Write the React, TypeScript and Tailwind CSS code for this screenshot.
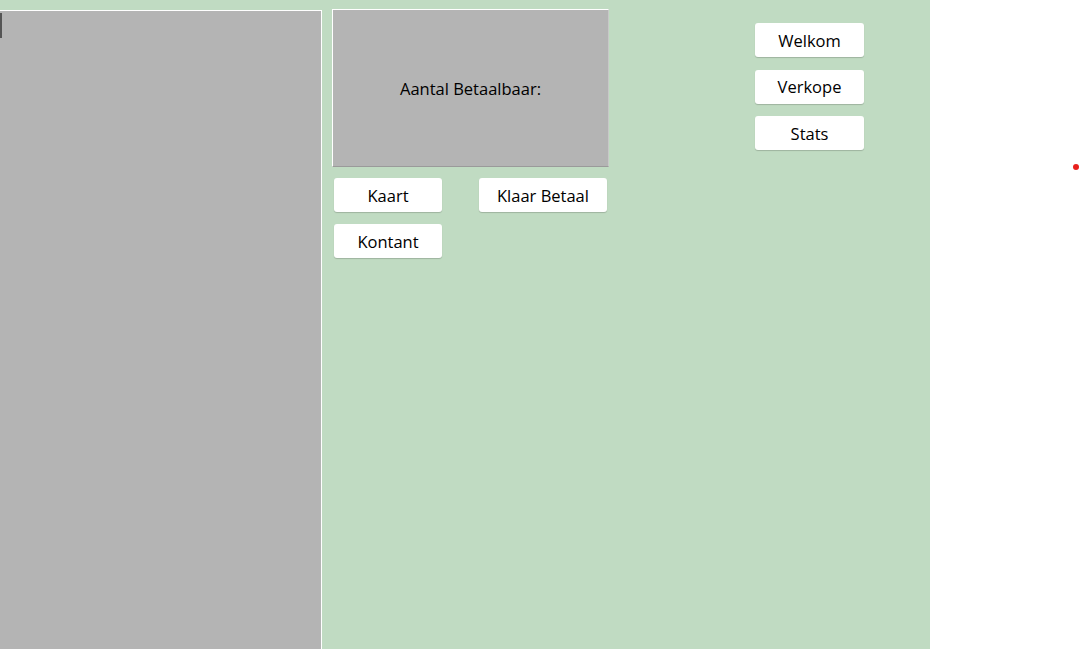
import type { ReactNode } from "react";

function Btn({ children, className = "" }: { children: ReactNode; className?: string }) {
  return (
    <button
      className={`h-[34px] rounded-[3px] bg-white pt-[2px] text-[16.5px] text-black shadow-[0_1px_1px_rgba(0,0,0,0.18)] ${className}`}
    >
      {children}
    </button>
  );
}

export default function App() {
  return (
    <div className="flex h-[649px] w-[1080px] bg-white font-['Open_Sans','Noto_Sans',sans-serif]">
      <div className="flex h-full w-[930px] bg-[#c0dbc2]">
        <div className="relative mt-[10px] h-[639px] w-[322px] border-t border-r border-white bg-[#b4b4b4]">
          <div className="absolute left-0 top-[2px] h-[25px] w-[2px] bg-[#555]" />
        </div>

        <div className="ml-[10px] mt-[9px] flex w-[277px] flex-col">
          <div className="flex h-[158px] items-center justify-center border-t border-l border-white border-b border-b-[#9a9a9a] border-r border-r-[#c8c8c8] bg-[#b4b4b4] pt-[2px] text-[16.5px] text-black">
            Aantal Betaalbaar:
          </div>
          <div className="mt-[11px] flex gap-[37px] pl-[2px]">
            <Btn className="w-[108px]">Kaart</Btn>
            <Btn className="w-[128px]">Klaar Betaal</Btn>
          </div>
          <div className="mt-[12px] pl-[2px]">
            <Btn className="w-[108px]">Kontant</Btn>
          </div>
        </div>

        <div className="ml-[146px] mt-[23px] flex flex-col gap-[12.5px]">
          <Btn className="w-[109px]">Welkom</Btn>
          <Btn className="w-[109px]">Verkope</Btn>
          <Btn className="w-[109px]">Stats</Btn>
        </div>
      </div>
      <div className="relative flex-1">
        <div className="absolute left-[143px] top-[164px] h-[6px] w-[6px] rounded-full bg-[#e8201c]" />
      </div>
    </div>
  );
}
